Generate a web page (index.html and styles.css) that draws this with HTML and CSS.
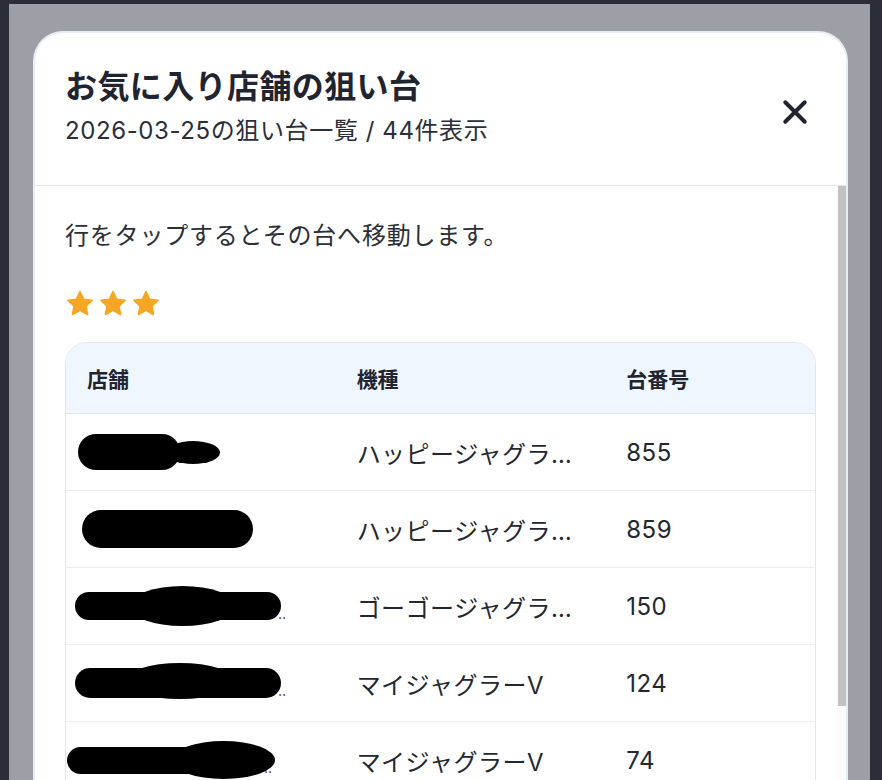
FILE: index.html
```html
<!DOCTYPE html>
<html lang="ja">
<head>
<meta charset="utf-8">
<title>お気に入り店舗の狙い台</title>
<link rel="stylesheet" href="styles.css">
</head>
<body>
<div class="screen">
  <div class="modal">
    <header class="modal-head">
      <div class="titles">
        <h1 class="title">お気に入り店舗の狙い台</h1>
        <p class="subtitle">2026-03-25の狙い台一覧 / 44件表示</p>
      </div>
      <button class="close" aria-label="閉じる">
        <svg viewBox="0 0 24 24" width="26" height="26"><path d="M3 3L21 21M21 3L3 21" stroke="#1f2430" stroke-width="3.6" stroke-linecap="round" fill="none"/></svg>
      </button>
    </header>
    <div class="modal-body">
      <div class="content">
        <p class="hint">行をタップするとその台へ移動します。</p>
        <div class="stars">
          <svg class="star" viewBox="0 0 24 24"><path d="M12 2.2l2.9 6.1 6.7.8-4.9 4.6 1.3 6.6L12 17l-6 3.3 1.3-6.6-4.9-4.6 6.7-.8z"/></svg>
          <svg class="star" viewBox="0 0 24 24"><path d="M12 2.2l2.9 6.1 6.7.8-4.9 4.6 1.3 6.6L12 17l-6 3.3 1.3-6.6-4.9-4.6 6.7-.8z"/></svg>
          <svg class="star" viewBox="0 0 24 24"><path d="M12 2.2l2.9 6.1 6.7.8-4.9 4.6 1.3 6.6L12 17l-6 3.3 1.3-6.6-4.9-4.6 6.7-.8z"/></svg>
        </div>
        <div class="table-card">
          <table class="list">
            <colgroup><col class="c-store"><col class="c-model"><col class="c-num"></colgroup>
            <thead>
              <tr><th>店舗</th><th>機種</th><th>台番号</th></tr>
            </thead>
            <tbody>
              <tr><td><span class="redact b1">店舗名</span></td><td>ハッピージャグラーVIII</td><td>855</td></tr>
              <tr><td><span class="redact b2">店舗名</span></td><td>ハッピージャグラーVIII</td><td>859</td></tr>
              <tr><td><span class="redact b3">店舗名</span><span class="tail">‥</span></td><td>ゴーゴージャグラー3</td><td>150</td></tr>
              <tr><td><span class="redact b4">店舗名</span><span class="tail">‥</span></td><td>マイジャグラーV</td><td>124</td></tr>
              <tr><td><span class="redact b5">店舗名</span><span class="tail">‥</span></td><td>マイジャグラーV</td><td>74</td></tr>
              <tr><td><span class="redact b2">店舗名</span></td><td>マイジャグラーV</td><td>75</td></tr>
            </tbody>
          </table>
        </div>
      </div>
      <div class="scrollbar"><div class="thumb"></div></div>
    </div>
  </div>
</div>
</body>
</html>
```
FILE: styles.css
```css
html, body {
  margin: 0;
  height: 100%;
}
body {
  background: #2c2c38;
  font-family: Inter, "Noto Sans CJK JP", sans-serif;
  color: #1f2430;
  overflow: hidden;
}
.screen {
  margin: 4px 12px 0 9px;
  height: 776px;
  box-sizing: border-box;
  padding: 27px 22px 0 24px;
  background: #9d9fa7;
  overflow: hidden;
}
.modal {
  width: 815px;
  height: 800px;
  box-sizing: border-box;
  background: #fff;
  border: 2px solid #e6edf5;
  border-bottom: none;
  border-radius: 30px 30px 0 0;
  overflow: hidden;
}
.modal-head {
  display: flex;
  align-items: flex-start;
  height: 153px;
  box-sizing: border-box;
  padding: 34px 27px 0 30px;
  border-bottom: 1px solid #e5e7eb;
}
.titles {
  flex: 1;
}
.title {
  margin: 0;
  font-size: 32px;
  line-height: 40px;
  font-weight: 700;
  letter-spacing: 0.4px;
  color: #1f2430;
}
.subtitle {
  margin: 8px 0 0;
  font-size: 24px;
  line-height: 32px;
  letter-spacing: 0.6px;
  color: #2a2f3a;
}
.close {
  width: 48px;
  height: 48px;
  margin-top: 21px;
  padding: 0;
  border: none;
  background: none;
  display: flex;
  align-items: center;
  justify-content: center;
}
.modal-body {
  display: flex;
}
.content {
  flex: 1;
  padding: 32px 20px 0 30px;
}
.hint {
  margin: 0;
  font-size: 24px;
  line-height: 36px;
  letter-spacing: 0.8px;
  color: #2b2f38;
}
.stars {
  display: flex;
  gap: 3px;
  margin-top: 35px;
  height: 30px;
}
.star {
  width: 30px;
  height: 30px;
  fill: #f5a623;
  stroke: #f5a623;
  stroke-width: 1.4;
  stroke-linejoin: round;
}
.table-card {
  margin-top: 23px;
  border: 1.5px solid #e2e7ee;
  border-radius: 22px;
  overflow: hidden;
}
.list {
  width: 100%;
  table-layout: fixed;
  border-collapse: separate;
  border-spacing: 0;
}
.c-store { width: 36%; }
.c-model { width: 36%; }
.c-num { width: 28%; }
.list thead tr {
  height: 71px;
}
.list th {
  background: #eff6fd;
  text-align: left;
  font-size: 21px;
  font-weight: 700;
  color: #1f2430;
  padding: 0 22px 0 21px;
  border-bottom: 1px solid #e3e8ef;
}
.list tbody tr {
  height: 77px;
}
.list td {
  font-size: 24px;
  letter-spacing: 0.5px;
  color: #23272f;
  padding: 0 22px 0 21px;
  border-bottom: 1px solid #eceef1;
  white-space: nowrap;
  overflow: hidden;
  text-overflow: ellipsis;
}
.redact {
  position: relative;
  display: inline-block;
  vertical-align: middle;
  box-sizing: border-box;
  padding-left: 20px;
  background: #000;
  color: #000;
  font-size: 14px;
  border-radius: 20px;
}
.redact::after {
  content: "";
  position: absolute;
  background: #000;
  border-radius: 50%;
}
.b1 { margin-left: -9px; width: 102px; height: 36px; line-height: 36px; }
.b1::after { left: 88px; top: 7px; width: 54px; height: 23px; }
.b2 { margin-left: -5px; width: 171px; height: 38px; line-height: 38px; }
.b2::after { display: none; }
.b3 { margin-left: -12px; width: 206px; height: 28px; line-height: 28px; }
.b3::after { left: 55px; top: -6px; width: 105px; height: 40px; }
.b4 { margin-left: -12px; width: 206px; height: 30px; line-height: 30px; }
.b4::after { left: 50px; top: -5px; width: 110px; height: 36px; }
.b5 { margin-left: -20px; width: 200px; height: 27px; line-height: 27px; }
.b5::after { left: 105px; top: -6px; width: 103px; height: 38px; }
.tail {
  font-size: 14px;
  color: #222;
  vertical-align: -6px;
  margin-left: -3px;
}
.scrollbar {
  width: 10px;
  padding-left: 2px;
  box-sizing: border-box;
  background: #fbfbfb;
}
.thumb {
  width: 8px;
  height: 520px;
  background: #c2c2c2;
}
```
